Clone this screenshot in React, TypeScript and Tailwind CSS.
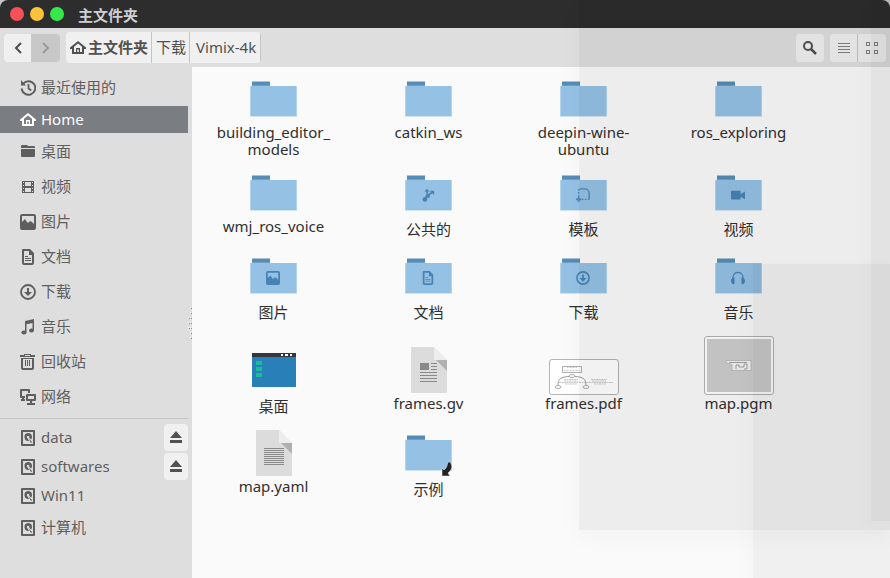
import React from "react";
import { JSX } from "react/jsx-runtime";

interface Place {
  id: string;
  label: string;
  icon: JSX.Element;
  active?: boolean;
  ejectable?: boolean;
}

interface FileItem {
  id: string;
  label: string;
  icon: JSX.Element;
}

// Chinese labels take a taller line than Latin ones
const hasCjk = (text: string) => /[\u4e00-\u9fff]/.test(text);

// Small 16px symbolic icon
const Symbolic: React.FC<{ children: React.ReactNode }> = ({ children }) => (
  <svg className="h-4 w-4 shrink-0" viewBox="0 0 16 16" fill="currentColor" aria-hidden="true">
    {children}
  </svg>
);

const HomeIcon = () => (
  <Symbolic>
    <path d="M8 1L0 7.6V9h2v5h12V9h2V7.6zM8 3.4l4 3.4V12h-2V8H6v4H4V6.8zM7.2 9.4h1.6V12H7.2z" fillRule="evenodd" />
  </Symbolic>
);

const DocumentShape = () => (
  <>
    <path d="M3 0h7l4 4v10a2 2 0 01-2 2H4a2 2 0 01-2-2V1a1 1 0 011-1zm1 2v12h8V6H9V2z" fillRule="evenodd" />
    <path d="M5 7h3v1H5zM5 9h6v1H5zM5 11h6v1H5z" />
  </>
);

const PictureShape = () => (
  <path
    d="M2 0h12a2 2 0 012 2v12a2 2 0 01-2 2H2a2 2 0 01-2-2V2a2 2 0 012-2zm0 2v6l2-2 1-1 2 3 1 1 2-2 2 1 2 2V2z"
    fillRule="evenodd"
  />
);

const DownloadShape = () => (
  <>
    <circle cx="8" cy="8" r="7" fill="none" stroke="currentColor" strokeWidth="1.8" />
    <path d="M7 4h2v4h3l-4 4-4-4h3z" />
  </>
);

const DriveIcon = () => (
  <Symbolic>
    <path d="M2 0h12a1 1 0 011 1v14a1 1 0 01-1 1H2a1 1 0 01-1-1V1a1 1 0 011-1zm1 2v12h10V2z" fillRule="evenodd" />
    <path d="M8 3a4 4 0 014 4c0 1-.4 2-1 2.6L9.2 7.7A1.3 1.3 0 107.5 8.200L9 11A4 4 0 118 3z" />
    <path d="M8.5 8.500l3.300 3.200v1.100h-1z" />
  </Symbolic>
);

const places: Place[] = [
  {
    id: "recent",
    label: "最近使用的",
    icon: (
      <Symbolic>
        <path d="M3.2 3.7A6.8 6.8 0 111.7 8.500" fill="none" stroke="currentColor" strokeWidth="2" />
        <path d="M1 0l5 5.500H1z" />
        <path d="M8.5 4v4.500l2.700 2" fill="none" stroke="currentColor" strokeWidth="1.8" />
      </Symbolic>
    ),
  },
  { id: "home", label: "Home", icon: <HomeIcon />, active: true },
  {
    id: "desktop",
    label: "桌面",
    icon: (
      <Symbolic>
        <path d="M2 1h5l1 1h6a1 1 0 011 1v1H1V2a1 1 0 011-1zM1 5h14v7a1 1 0 01-1 1H2a1 1 0 01-1-1z" />
      </Symbolic>
    ),
  },
  {
    id: "videos",
    label: "视频",
    icon: (
      <Symbolic>
        <path
          d="M2 2h12v12H2zm3 1v4h6V3zm0 6v4h6V9zM3 3v1h1V3zm0 3v1h1V6zm0 3v1h1V9zm0 3v1h1v-1zM12 3v1h1V3zm0 3v1h1V6zm0 3v1h1V9zm0 3v1h1v-1z"
          fillRule="evenodd"
        />
      </Symbolic>
    ),
  },
  { id: "pictures", label: "图片", icon: <Symbolic><PictureShape /></Symbolic> },
  { id: "documents", label: "文档", icon: <Symbolic><DocumentShape /></Symbolic> },
  { id: "downloads", label: "下载", icon: <Symbolic><DownloadShape /></Symbolic> },
  {
    id: "music",
    label: "音乐",
    icon: (
      <Symbolic>
        <path d="M5 2l9-2v11h-1.500V4l-6 1.300V13H5z" />
        <ellipse cx="4" cy="13.5" rx="2.6" ry="2" />
        <ellipse cx="11.5" cy="11.5" rx="2.5" ry="2" />
      </Symbolic>
    ),
  },
  {
    id: "trash",
    label: "回收站",
    icon: (
      <Symbolic>
        <path
          d="M4 0h7v1h4v2H0V1h4zM5 1h5v1H5zM1 4h13v10a2 2 0 01-2 2H3a2 2 0 01-2-2zm2 1v9h9V5zM5 6h1v6H5zM7 6h1v6H7zM9 6h1v6H9z"
          fillRule="evenodd"
        />
      </Symbolic>
    ),
  },
  {
    id: "network",
    label: "网络",
    icon: (
      <Symbolic>
        <path d="M1 0h8a1 1 0 011 1v3H8V2H2v5h3v2H4v1h1v2H1v-2h1V9H1a1 1 0 01-1-1V1a1 1 0 011-1z" />
        <path d="M7 5h8a1 1 0 011 1v5a1 1 0 01-1 1h-3v2h3v2H7v-2h3v-2H7a1 1 0 01-1-1V6a1 1 0 011-1zm1 2v3h6V7z" fillRule="evenodd" />
      </Symbolic>
    ),
  },
];

const devices: Place[] = [
  { id: "data", label: "data", icon: <DriveIcon />, ejectable: true },
  { id: "softwares", label: "softwares", icon: <DriveIcon />, ejectable: true },
  { id: "win11", label: "Win11", icon: <DriveIcon /> },
  { id: "computer", label: "计算机", icon: <DriveIcon /> },
];

// Folder with an optional emblem in its middle
const Folder: React.FC<{ children?: React.ReactNode; link?: boolean }> = ({ children, link }) => (
  <svg className="h-12 w-12" viewBox="0 0 48 48" aria-hidden="true">
    <path d="M2 5.500h18v5H2z" fill="#568db6" />
    <path d="M0 10h47v31H0z" fill="#d3e4f1" />
    <path d="M0.500 10h46v30h-46z" fill="#94c1e4" />
    <path d="M2 9h18v1H2z" fill="#6d9fc5" />
    {children && (
      <svg x="16" y="18" width="14" height="14" viewBox="0 0 16 16" fill="#4782b4" color="#4782b4">
        {children}
      </svg>
    )}
    {link && (
      <path d="M45 32c3 4 2 8-2 11l2 3h-8v-8l2 2c3-2 3-5 4-8z" fill="#222222" stroke="#f4f4f4" strokeWidth="0.5" />
    )}
  </svg>
);

const TextFile: React.FC<{ children: React.ReactNode }> = ({ children }) => (
  <svg className="h-12 w-12" viewBox="0 0 48 48" aria-hidden="true">
    <path d="M7 0h22l13 13v32a1 1 0 01-1 1H7a1 1 0 01-1-1V1a1 1 0 011-1z" fill="#dcdcdc" />
    <path d="M29 0l13 13H30a1 1 0 01-1-1z" fill="#ededed" />
    <path d="M31 13h11v11z" fill="#b0b0b0" />
    {children}
  </svg>
);

const files: FileItem[] = [
  { id: "building-editor", label: "building_editor_\nmodels", icon: <Folder /> },
  { id: "catkin", label: "catkin_ws", icon: <Folder /> },
  { id: "deepin", label: "deepin-wine-\nubuntu", icon: <Folder /> },
  { id: "ros-exploring", label: "ros_exploring", icon: <Folder /> },
  { id: "wmj", label: "wmj_ros_voice", icon: <Folder /> },
  {
    id: "public",
    label: "公共的",
    icon: (
      <Folder>
        <circle cx="4.5" cy="13" r="2.7" />
        <path d="M4.5 13L7 9V2M5 10l8-5" fill="none" stroke="#4782b4" strokeWidth="1.8" />
        <path d="M4 4l2.500-3L10 4zM10 3h5v5zM7 7h3v4H7z" />
      </Folder>
    ),
  },
  {
    id: "templates",
    label: "模板",
    icon: (
      <Folder>
        <path d="M4 1h6a5 5 0 015 5v7" fill="none" stroke="#4f88b7" strokeWidth="1.6" />
        <path d="M3 1v12M3 13h12" fill="none" stroke="#4f88b7" strokeWidth="1.6" strokeDasharray="2 1.5" />
        <path d="M2 10h2v2h2v2H4v2H2v-2H0v-2h2z" fill="#4f88b7" />
      </Folder>
    ),
  },
  {
    id: "videos",
    label: "视频",
    icon: (
      <Folder>
        <path d="M1 3h9a1 1 0 011 1v3l5-3v9l-5-3v2a1 1 0 01-1 1H1a1 1 0 01-1-1V4a1 1 0 011-1z" />
      </Folder>
    ),
  },
  { id: "pictures", label: "图片", icon: <Folder><PictureShape /></Folder> },
  { id: "documents", label: "文档", icon: <Folder><DocumentShape /></Folder> },
  { id: "downloads", label: "下载", icon: <Folder><DownloadShape /></Folder> },
  {
    id: "music",
    label: "音乐",
    icon: (
      <Folder>
        <path d="M2.500 11C1 5 4 1.500 8 1.500S15 5 13.500 11" fill="none" stroke="#4782b4" strokeWidth="1.3" />
        <path d="M4 7v7a1 1 0 01-1 1C1 15 0 13 0 11s2-4 4-4zM12 7v7a1 1 0 001 1c2 0 3-2 3-4s-2-4-4-4z" />
      </Folder>
    ),
  },
  {
    id: "desktop",
    label: "桌面",
    icon: (
      <svg className="h-12 w-12" viewBox="0 0 48 48" aria-hidden="true">
        <path d="M2 6h44v34H2z" fill="#2980b9" />
        <path d="M2 6h44v4H2z" fill="#34363c" />
        <path d="M31 7h2v2h-2zM35 7h3v2h-3zM40 7h2v2h-2z" fill="#ffffff" />
        <path d="M6 14h6v4H6zM6 20h6v4H6zM6 26h6v4H6z" fill="#1abc9c" />
      </svg>
    ),
  },
  {
    id: "frames-gv",
    label: "frames.gv",
    icon: (
      <TextFile>
        <path d="M15 16h9v7h-9z" fill="#8a8a8a" />
        <path d="M26 16h6v1h-6zM26 19h6v1h-6zM26 22h6v1h-6zM15 25h17v1H15zM15 28h17v1H15zM15 31h17v1H15zM15 34h17v1H15z" fill="#8a8a8a" />
      </TextFile>
    ),
  },
  {
    id: "frames-pdf",
    label: "frames.pdf",
    icon: (
      <svg className="h-9 w-[70px]" viewBox="0 0 70 36" fill="none" aria-hidden="true">
        <rect x="0.5" y="0.5" width="69" height="35" rx="2.5" fill="#ffffff" stroke="#b4b5b1" />
        <path d="M13.500 7.500h19v6h-19z" stroke="#8c8c8c" strokeWidth="0.7" />
        <path d="M18 8.500h10M15 11.500h16" stroke="#b4b4b4" strokeWidth="0.7" strokeDasharray="1 0.5" />
        <ellipse cx="23" cy="17" rx="3" ry="1.5" stroke="#8a8a8a" strokeWidth="0.7" />
        <ellipse cx="9" cy="28" rx="3" ry="1.5" stroke="#8a8a8a" strokeWidth="0.7" />
        <ellipse cx="37" cy="28" rx="3" ry="1.5" stroke="#8a8a8a" strokeWidth="0.7" />
        <path d="M20 17.500C12 18 9 20 9 26M26 17.500C34 18 37 20 37 26" stroke="#707070" strokeWidth="0.7" />
        <path
          d="M15 20.500h14M15 22h14M10 23.500h54M16 25h12M42 20.500h16M43 22h14M45 25h12"
          stroke="#a8a8a8"
          strokeWidth="0.6"
          strokeDasharray="2 0.5"
        />
      </svg>
    ),
  },
  {
    id: "map-pgm",
    label: "map.pgm",
    icon: (
      <svg className="h-[59px] w-[70px]" viewBox="0 0 70 59" aria-hidden="true">
        <rect x="0.5" y="0.5" width="69" height="58" rx="2.5" fill="#ffffff" stroke="#b4b5b1" />
        <path d="M3 3h64v53H3z" fill="#cdcdcd" />
        <path d="M22 24.500h25v10H28v-6l-6-2z" fill="#f4f4f4" stroke="#a4a4a4" strokeWidth="0.6" />
        <path d="M25 26.500h18M32 33v-4h3v2h5v-3h3v5h-3" fill="none" stroke="#808080" strokeWidth="0.7" />
      </svg>
    ),
  },
  {
    id: "map-yaml",
    label: "map.yaml",
    icon: (
      <TextFile>
        <path
          d="M14 18h20v1H14zM14 20h20v1H14zM14 22h20v1H14zM14 24h20v1H14zM14 26h20v1H14zM14 28h20v1H14zM14 30h20v1H14zM14 32h20v1H14zM14 34h20v1H14z"
          fill="#8a8a8a"
        />
      </TextFile>
    ),
  },
  { id: "examples", label: "示例", icon: <Folder link /> },
];

const TitleBar = () => (
  <header className="flex h-7 items-center rounded-t-lg bg-[#2d2d2d] pl-2.5">
    <div className="flex gap-1.5">
      <button aria-label="Close" className="h-3.5 w-3.5 rounded-full bg-[#f65058]" />
      <button aria-label="Minimize" className="h-3.5 w-3.5 rounded-full bg-[#fcc338]" />
      <button aria-label="Maximize" className="h-3.5 w-3.5 rounded-full bg-[#36e84c]" />
    </div>
    <h1 className="ml-3.5 pt-0.5 font-bold text-[#cfcfd4]">主文件夹</h1>
  </header>
);

const Toolbar = () => (
  <div className="flex h-[39px] items-center bg-[#dedede] px-1">
    <div className="flex h-7 overflow-hidden rounded-sm">
      <button aria-label="Back" className="flex w-[27px] items-center justify-center bg-[#f0f0f0] text-[#4d4d4d]">
        <Symbolic>
          <path d="M11 3L6 8l5 5" fill="none" stroke="currentColor" strokeWidth="2" />
        </Symbolic>
      </button>
      <button aria-label="Forward" className="flex w-[29px] items-center justify-center bg-[#c8c8c8] text-[#9b9b9b]">
        <Symbolic>
          <path d="M5 3l5 5-5 5" fill="none" stroke="currentColor" strokeWidth="2" />
        </Symbolic>
      </button>
    </div>
    <nav className="ml-1.5 flex h-[31px] overflow-hidden rounded-sm bg-[#f0f0f0] text-[#515151]">
      <button className="flex items-center gap-0.5 border-r border-[#c4c4c4] pr-[3px] pl-1 font-bold">
        <HomeIcon />
        主文件夹
      </button>
      <button className="border-r border-[#c4c4c4] pr-[3px] pl-1">下载</button>
      <button className="border-r border-[#c4c4c4] pr-1 pl-1.5">Vimix-4k</button>
    </nav>
    <button aria-label="Search" className="ml-auto flex h-7 w-7 items-center justify-center rounded-sm bg-[#f0f0f0] text-[#515151]">
      <Symbolic>
        <circle cx="6" cy="6" r="4" fill="none" stroke="currentColor" strokeWidth="2" />
        <path d="M9 9l5 5" fill="none" stroke="currentColor" strokeWidth="2.5" />
      </Symbolic>
    </button>
    <div className="ml-1.5 flex h-7 overflow-hidden rounded-sm bg-[#f0f0f0] text-[#808080]">
      <button aria-label="List view" className="flex w-7 items-center justify-center border-r border-[#c4c4c4]">
        <Symbolic>
          <path d="M2 3h12v1H2zM2 6h12v1H2zM2 9h12v1H2zM2 12h12v1H2z" />
        </Symbolic>
      </button>
      <button aria-label="Icon view" className="flex w-7 items-center justify-center">
        <Symbolic>
          <path d="M2 2h4v4H2zm1 1v2h2V3zM10 2h4v4h-4zm1 1v2h2V3zM2 10h4v4H2zm1 1v2h2v-2zM10 10h4v4h-4zm1 1v2h2v-2z" fillRule="evenodd" />
        </Symbolic>
      </button>
    </div>
  </div>
);

const PlaceRow: React.FC<Place> = ({ label, icon, active, ejectable }) => (
  <li className={`flex items-center ${hasCjk(label) ? "h-[33px]" : "h-[27px]"} ${active ? "bg-[#7a7d82] text-white" : ""}`}>
    <a href="#" className="flex h-full flex-1 items-center gap-[5px] pl-5">
      {icon}
      {label}
    </a>
    {ejectable && (
      <button aria-label={`Eject ${label}`} className="flex h-[27px] w-6 items-center justify-center rounded-sm bg-[#f0f0f0] text-[#515151]">
        <Symbolic>
          <path d="M8 1l6 7H2zM2 10h12v3H2z" />
        </Symbolic>
      </button>
    )}
  </li>
);

const Sidebar = () => (
  <aside className="flex w-48 shrink-0 bg-[#dedede] text-[#5e5e5e]">
    <nav className="flex flex-1 flex-col gap-0.5 pt-1">
      <ul className="flex flex-col gap-0.5">
        {places.map((place) => (
          <PlaceRow key={place.id} {...place} />
        ))}
      </ul>
      <hr className="my-[3px] border-[#c6c6c6]" />
      <ul className="flex flex-col gap-0.5">
        {devices.map((device) => (
          <PlaceRow key={device.id} {...device} />
        ))}
      </ul>
    </nav>
    <div className="flex w-1 items-center">
      <svg className="h-8 w-1" viewBox="0 0 4 32" aria-hidden="true">
        <path d="M2 0h1v1H2zM2 5h1v1H2zM0 10h1v1H0zM2 10h1v1H2zM0 15h1v1H0zM2 15h1v1H2zM0 20h1v1H0zM2 20h1v1H2zM2 25h1v1H2zM2 30h1v1H2z" fill="#ffffff" />
        <path d="M3 1h1v1H3zM3 6h1v1H3zM1 11h1v1H1zM3 11h1v1H3zM1 16h1v1H1zM3 16h1v1H3zM1 21h1v1H1zM3 21h1v1H3zM3 26h1v1H3zM3 31h1v1H3z" fill="#8e8e8e" />
      </svg>
    </div>
  </aside>
);

// Tiles of one row share the bottom line of their icons
const FileTile: React.FC<FileItem> = ({ label, icon }) => (
  <button className="row-span-2 grid grid-rows-subgrid text-[#2f2f2f]">
    <span className="flex min-h-12 items-end justify-center">{icon}</span>
    <span className={`whitespace-pre-line ${hasCjk(label) ? "leading-[23px]" : "leading-[17px]"}`}>{label}</span>
  </button>
);

const FileGrid = () => (
  <main className="grid flex-1 auto-rows-max grid-cols-[repeat(auto-fill,155px)] content-start bg-[#fafafa] pt-[9px] pl-1">
    {files.map((file) => (
      <div key={file.id} className="row-span-2 grid grid-rows-subgrid pb-3">
        <FileTile {...file} />
      </div>
    ))}
  </main>
);

// Faint panes of the windows behind, seen through the whole frame
const Ghosts = () => (
  <div className="pointer-events-none absolute inset-0 overflow-hidden">
    <div className="absolute top-0 right-0 bottom-12 left-[579px] bg-black/5 shadow-[0_8px_24px_rgba(0,0,0,0.03)]" />
    <div className="absolute top-[264px] right-0 bottom-0 left-[753px] bg-black/4 shadow-[0_8px_24px_rgba(0,0,0,0.03)]" />
    <div className="absolute top-0 right-0 bottom-[57px] left-[871px] bg-black/4 shadow-[0_8px_24px_rgba(0,0,0,0.03)]" />
  </div>
);

const App: React.FC = () => {
  return (
    <div className="relative flex min-h-screen flex-col bg-[#c8c8c8] font-['Noto_Sans','Noto_Sans_CJK_SC',sans-serif] text-[15px]">
      <TitleBar />
      <Toolbar />
      <div className="flex flex-1">
        <Sidebar />
        <FileGrid />
      </div>
      <Ghosts />
    </div>
  );
};

export default App;
